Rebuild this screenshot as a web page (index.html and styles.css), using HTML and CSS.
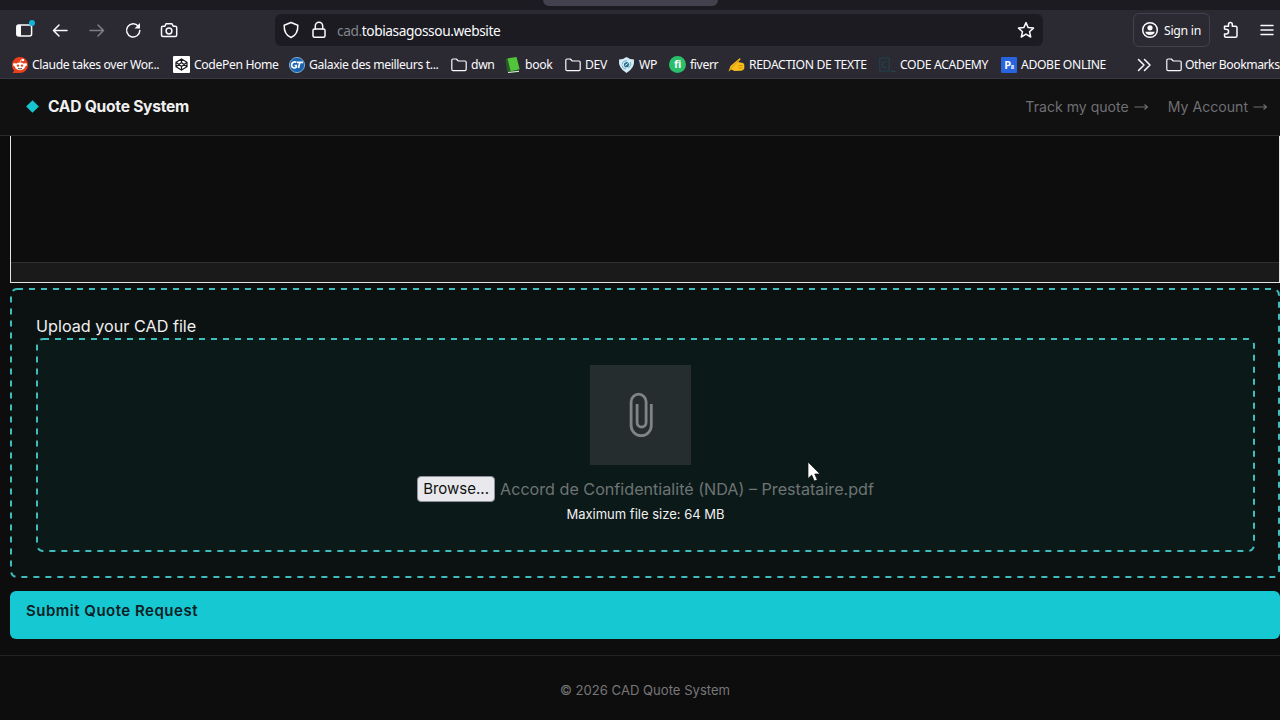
FILE: index.html
```html
<!DOCTYPE html>
<html lang="en">
<head>
    <meta charset="UTF-8">
    <meta name="viewport" content="width=device-width, initial-scale=1.0">
    <title>CAD Quote System</title>
    <link rel="stylesheet" href="styles.css">
</head>
<body>
    <div class="browser">
        <div class="tab-strip"><div class="tab"></div></div>
        <div class="toolbar">
            <div class="nav-buttons">
                <svg width="22" height="22" viewBox="0 0 22 22"><rect x="3.8" y="6" width="14.8" height="11" rx="2" fill="none" stroke="#fbfbfe" stroke-width="1.5"/><path d="M4 6h4v11H4z" fill="#fbfbfe"/><circle cx="19" cy="4" r="3" fill="#12b5d8"/></svg>
                <svg width="22" height="22" viewBox="0 0 22 22"><path d="M18 11.500H4.500M10 6l-5.500 5.500L10 17" class="line"/></svg>
                <svg class="dim" width="22" height="22" viewBox="0 0 22 22"><path d="M4 11.500h13.500M12 6l5.500 5.500L12 17" class="line"/></svg>
                <svg width="22" height="22" viewBox="0 0 22 22"><path d="M16.300 7.200A6.600 6.600 0 1 0 17.800 11.500" class="line"/><path d="M18 4v5.500h-5.500z" fill="#fbfbfe"/></svg>
                <svg width="22" height="22" viewBox="0 0 22 22"><path d="M8 4.800h6l1.200 2.400h2.100q1.400 0 1.400 1.400v7.300q0 1.500-1.500 1.500H5q-1.500 0-1.500-1.500V8.600q0-1.400 1.400-1.400h2z" class="line"/><circle cx="11" cy="12" r="2.900" class="line"/></svg>
            </div>
            <div class="url-bar">
                <svg width="20" height="20" viewBox="0 0 20 20"><path d="M10 2.500l6.800 2.700c.2 5-1.400 10-6.800 12.300C4.600 15.200 3 10.200 3.200 5.200z" class="line"/></svg>
                <svg class="lock" width="20" height="20" viewBox="0 0 20 20"><rect x="4" y="9" width="12" height="8.300" rx="1.500" class="line"/><path d="M6.300 9V6a3.700 3.700 0 0 1 7.400 0v3" class="line"/></svg>
                <span class="url"><span class="sub">cad.</span>tobiasagossou.website</span>
                <svg width="20" height="20" viewBox="0 0 20 20"><path d="M10 2.600l2.200 5 5.300.5-4 3.600 1.200 5.300L10 14.200 5.300 17l1.200-5.300-4-3.600 5.300-.5z" class="line"/></svg>
            </div>
            <div class="toolbar-right">
                <div class="sign-in">
                    <svg width="18" height="18" viewBox="0 0 18 18"><circle cx="9" cy="9" r="7.300" class="line"/><circle cx="9" cy="6.800" r="2.600" fill="#fbfbfe"/><path d="M4.200 10.800h9.600c-.4 2-2.300 3.300-4.800 3.300s-4.400-1.300-4.800-3.300z" fill="#fbfbfe"/></svg>
                    <span>Sign in</span>
                </div>
                <svg width="20" height="20" viewBox="0 0 20 20"><path d="M3.500 9V6.200h4V4.500a1.900 1.900 0 0 1 3.800 0v1.700h3.200q1.500 0 1.500 1.500v8q0 1.500-1.500 1.500h-9.500q-1.500 0-1.500-1.500V14h1.700a2 2 0 0 0 0-4.800z" class="line"/></svg>
                <svg width="14" height="14" viewBox="0 0 14 14"><path d="M1 2.500h12M1 7h12M1 11.500h12" class="line"/></svg>
            </div>
        </div>
        <div class="bookmarks">
            <div class="bookmark"><svg width="16" height="16" viewBox="0 0 16 16"><path d="M8 0a8 8 0 1 1 0 16H.6l1.600-2.500A8 8 0 0 1 8 0z" fill="#e8401c"/><circle cx="2.600" cy="7.600" r="1.600" fill="#fff"/><circle cx="13.400" cy="7.600" r="1.600" fill="#fff"/><circle cx="11" cy="3" r="1.200" fill="#fff"/><path d="M8 5.500l1-2.700 2 .4" fill="none" stroke="#fff" stroke-width=".8"/><ellipse cx="8" cy="9.300" rx="5.200" ry="3.900" fill="#fff"/><circle cx="6" cy="8.600" r="1.200" fill="#e8401c"/><circle cx="10" cy="8.600" r="1.200" fill="#e8401c"/><path d="M6 11.300q2 1.200 4 0" fill="none" stroke="#222" stroke-width=".8"/></svg><span>Claude takes over Wor...</span></div>
            <div class="bookmark"><svg width="17" height="17" viewBox="0 0 17 17"><rect width="17" height="17" rx="1" fill="#fff"/><path d="M8.500 3l5.500 3.300v4.400L8.500 14 3 10.700V6.300zM8.500 3v3.600M8.500 10.400V14M3 6.300l5.500 4.100L14 6.300M3 10.700l5.500-4.100 5.500 4.100" fill="none" stroke="#16161c" stroke-width="1.200"/></svg><span>CodePen Home</span></div>
            <div class="bookmark"><svg width="16" height="16" viewBox="0 0 16 16"><circle cx="8" cy="8" r="7.600" fill="#1c64ae" stroke="#8fc1e8" stroke-width=".8"/><path d="M7.500 5.300C4.500 4 2.400 6 2.600 8.400s3 3.400 4.700 1.800V8.500H5.500M8 5.300h6M10.800 5.500L9.500 11" fill="none" stroke="#fff" stroke-width="1.700"/></svg><span>Galaxie des meilleurs t...</span></div>
            <div class="bookmark"><svg width="16" height="16" viewBox="0 0 16 16"><path d="M.8 3.300q0-1.300 1.300-1.300h3.200l2 2h6.600q1.300 0 1.300 1.300v7q0 1.300-1.300 1.300H2.100q-1.300 0-1.300-1.300z" class="line folder"/></svg><span>dwn</span></div>
            <div class="bookmark"><svg width="16" height="16" viewBox="0 0 16 16"><path d="M.5 2.500L3 1l2.600 12.500L14 13v2.200L4 16l-2-1.600z" fill="#285a28"/><path d="M2.500 1.400L11.600 0l3 12.200-9 2z" fill="#52c43a"/><path d="M3 15.500l11-1.200" stroke="#e8eee8" stroke-width="1"/></svg><span>book</span></div>
            <div class="bookmark"><svg width="16" height="16" viewBox="0 0 16 16"><path d="M.8 3.300q0-1.300 1.300-1.300h3.200l2 2h6.600q1.300 0 1.300 1.300v7q0 1.300-1.300 1.300H2.100q-1.300 0-1.300-1.300z" class="line folder"/></svg><span>DEV</span></div>
            <div class="bookmark"><svg width="17" height="16" viewBox="0 0 17 16"><path d="M1 2.500Q5 2.500 8.500 0 12 2.500 16 2.500 17 11 8.500 16 0 11 1 2.500z" fill="#d7edf6"/><path d="M4 7.500q.5-4 5-4M12.500 5q1.500 3.500-2 6M8 12q-3.500-.5-4-3.500" fill="none" stroke="#6db4cf" stroke-width="1"/><path d="M6.300 6l3-1.300 2 2.300-1 3-3 .5-1.500-2z" fill="#28718d"/><path d="M7.200 8.500l2.500-2" stroke="#fff"/></svg><span>WP</span></div>
            <div class="bookmark"><span class="fiverr-logo">fi</span><span>fiverr</span></div>
            <div class="bookmark"><svg width="17" height="16" viewBox="0 0 16 16"><path d="M0 14.500L2 9l4-3.500L11.500 1l.5 1.500L9.500 5l5 1q1.500.8 1.300 2.500v3q-.8 2-3 2.300L6 14l-3-1.500z" fill="#f6bd1b"/><path d="M1 13L10 3.500M10 8.500h4M10 11h4" stroke="#cf850b" stroke-width=".8" fill="none"/></svg><span>REDACTION DE TEXTE</span></div>
            <div class="bookmark"><svg width="17" height="16" viewBox="0 0 17 16"><path d="M.8 1h9.400v13H.8zM7.700 5H4.500Q3.500 5 3.500 6v3.500q0 1 1 1h3.200M12 14.300h4.500" fill="none" stroke="#21424e" stroke-width="1.200"/></svg><span>CODE ACADEMY</span></div>
            <div class="bookmark"><span class="adobe-logo">P<small>8</small></span><span>ADOBE ONLINE</span></div>
            <svg width="16" height="16" viewBox="0 0 16 16"><path d="M1.500 2.500L7 8l-5.500 5.500M7.500 2.500L13 8l-5.500 5.500" class="line"/></svg>
            <div class="bookmark other"><svg width="16" height="16" viewBox="0 0 16 16"><path d="M.8 3.300q0-1.300 1.300-1.300h3.200l2 2h6.600q1.300 0 1.300 1.300v7q0 1.300-1.300 1.300H2.100q-1.300 0-1.300-1.300z" class="line folder"/></svg><span>Other Bookmarks</span></div>
        </div>
    </div>

    <header class="site-header">
        <a class="brand"><span class="diamond"></span>CAD Quote System</a>
        <nav>
            <a>Track my quote <svg width="15" height="10" viewBox="0 0 15 10"><path d="M.5 6h13M10.500 3.500L13.500 6l-3 2.500"/></svg></a>
            <a>My Account <svg width="15" height="10" viewBox="0 0 15 10"><path d="M.5 6h13M10.500 3.500L13.500 6l-3 2.500"/></svg></a>
        </nav>
    </header>

    <main>
        <div class="editor"><div class="editor-status"></div></div>

        <div class="upload">
            <svg class="dashes"><rect x="1" y="1" rx="6"/></svg>
            <label>Upload your CAD file</label>
            <div class="dropzone">
                <svg class="dashes"><rect x="1" y="1" rx="6"/></svg>
                <div class="file-icon">
                    <svg width="26" height="48" viewBox="0 0 26 48"><path d="M23.300 13v21.500a10.100 10.100 0 0 1-20.200 0V10.700a7.500 7.500 0 0 1 15 0v20.800a4.500 4.500 0 0 1-9 0V13"/></svg>
                </div>
                <div class="file-row">
                    <button class="browse">Browse...</button>
                    <span class="file-name">Accord de Confidentialité (NDA) – Prestataire.pdf</span>
                </div>
                <div class="hint">Maximum file size: 64 MB</div>
            </div>
        </div>

        <button class="submit">Submit Quote Request</button>
    </main>

    <footer>© 2026 CAD Quote System</footer>

    <svg class="cursor" width="14" height="22" viewBox="0 0 14 22"><path d="M1 1v16.500l3.700-3.400 2.600 6 3-1.300-2.600-5.800H13z" fill="#fff" stroke="#101010" stroke-width=".7"/></svg>
</body>
</html>
```
FILE: styles.css
```css
* {
    box-sizing: border-box;
}
body {
    margin: 0;
    width: 1280px;
    height: 720px;
    overflow: hidden;
    background: #0d0d0d;
    color: #f0f0f0;
    font-family: Inter, sans-serif;
}
svg {
    display: block;
    flex: none;
}
.line {
    fill: none;
    stroke: #fbfbfe;
    stroke-width: 1.5;
    stroke-linejoin: round;
    stroke-linecap: round;
}
.folder {
    stroke-width: 1.2;
}
.dim {
    opacity: 0.4;
}

/* browser chrome */
.browser {
    height: 79px;
    background: #2b2a33;
    border-bottom: 1px solid #38373f;
    color: #fbfbfe;
    font-family: "Noto Sans", sans-serif;
    overflow: hidden;
}
.tab-strip {
    height: 10px;
    background: #1c1b22;
}
.tab {
    width: 175px;
    height: 6px;
    margin-left: 543px;
    background: #42414d;
    border-radius: 0 0 6px 6px;
}
.toolbar {
    display: flex;
    align-items: center;
    height: 40px;
}
.nav-buttons {
    display: flex;
    gap: 14.3px;
    width: 275px;
    padding-left: 13px;
}
.url-bar {
    display: flex;
    align-items: center;
    width: 768px;
    height: 32px;
    padding: 0 7px 0 6px;
    background: #1c1b22;
    border-radius: 6px;
}
.lock {
    margin-left: 8px;
}
.url {
    flex: 1;
    margin-left: 8px;
    font-size: 13.7px;
    letter-spacing: -0.4px;
}
.sub {
    color: #85848c;
}
.toolbar-right {
    display: flex;
    align-items: center;
    gap: 19px;
    margin-left: 90px;
}
.toolbar-right > svg:nth-child(2) {
    margin-left: -8px;
}
.sign-in {
    display: flex;
    align-items: center;
    gap: 5px;
    width: 77px;
    height: 34px;
    padding-left: 7px;
    border: 1px solid #42414d;
    border-radius: 6px;
    font-size: 12.3px;
    letter-spacing: -0.3px;
}
.bookmarks {
    display: grid;
    grid-template-columns: 161px 116px 162px 54px 60px 53px 51px 59px 151px 121px 137px 29px 1fr;
    align-items: center;
    height: 29px;
    padding-left: 12px;
    font-size: 12.2px;
    letter-spacing: -0.37px;
}
.bookmark {
    display: flex;
    align-items: center;
    gap: 4px;
    white-space: nowrap;
}
.other {
    gap: 3px;
    letter-spacing: -0.45px;
}
.fiverr-logo, .adobe-logo {
    width: 17px;
    height: 17px;
    background: #2bbf6a;
    border-radius: 50%;
    font: bold 11px/16px "Open Sans", sans-serif;
    text-align: center;
}
.adobe-logo {
    width: 16px;
    height: 16px;
    margin-left: 1px;
    background: #2864e0;
    border-radius: 1px;
}
.adobe-logo small {
    font-size: 6px;
}

/* page */
.site-header {
    display: flex;
    align-items: center;
    justify-content: space-between;
    height: 57px;
    padding: 0 12px 2px 26px;
    background: #111;
    border-bottom: 1px solid #2b2b2b;
}
.brand {
    display: flex;
    align-items: center;
    gap: 11px;
    font-size: 15.6px;
    font-weight: 700;
    letter-spacing: -0.25px;
}
.diamond {
    width: 9px;
    height: 9px;
    margin-left: 2px;
    background: #16c5cf;
    transform: rotate(45deg);
}
.site-header nav {
    display: flex;
    gap: 19px;
    font-size: 14.1px;
    color: #6f6f73;
}
.site-header nav a {
    display: flex;
    align-items: center;
    gap: 5px;
}
.site-header nav path {
    fill: none;
    stroke: #6f6f73;
    stroke-width: 1.1;
}
main {
    padding-left: 10px;
}
.editor {
    display: flex;
    align-items: flex-end;
    height: 147px;
    border: 1px solid #e4e4e4;
    border-top: 0;
}
.editor-status {
    flex: 1;
    height: 20px;
    background: #1b1a1b;
    border-top: 1px solid #303030;
}
.upload {
    position: relative;
    height: 290px;
    margin-top: 5px;
    padding: 28px 25px 25px 26px;
    background: #0c1212;
    border-radius: 7px;
}
.upload label {
    display: block;
    height: 22px;
    font-size: 16.2px;
    line-height: 20px;
}
.dropzone {
    position: relative;
    display: flex;
    flex-direction: column;
    align-items: center;
    height: 214px;
    padding-top: 27px;
    background: #0c1919;
    border-radius: 7px;
}
.dashes {
    position: absolute;
    left: 0;
    top: 0;
    width: 100%;
    height: 100%;
}
.dashes rect {
    width: calc(100% - 2px);
    height: calc(100% - 2px);
    fill: none;
    stroke: #3fbdbd;
    stroke-width: 2;
    stroke-dasharray: 6 6;
}
.file-icon {
    display: flex;
    align-items: center;
    justify-content: center;
    width: 101px;
    height: 100px;
    margin-right: 11px;
    padding-left: 2px;
    background: #262d2e;
}
.file-icon path {
    fill: none;
    stroke: #7f8586;
    stroke-width: 2.8;
}
.file-row {
    display: flex;
    align-items: center;
    gap: 5px;
    height: 28px;
    margin-top: 10px;
    font-size: 16.15px;
}
.browse {
    width: 78px;
    height: 26px;
    margin-bottom: 1px;
    padding: 0;
    border: 1.5px solid #8f8f9d;
    border-radius: 4px;
    background: #e9e9ed;
    color: #111;
    font: 15px Inter, sans-serif;
}
.file-name {
    color: #6c7474;
}
.hint {
    margin-top: 3px;
    font-size: 13px;
}
.submit {
    display: block;
    width: 100%;
    height: 48px;
    margin-top: 13px;
    padding: 0 16px 9px;
    border: 0;
    border-radius: 6px;
    background: #16c8d2;
    color: #0c2024;
    font: 600 15px Inter, sans-serif;
    letter-spacing: 0.5px;
    text-align: left;
}
footer {
    height: 65px;
    margin-top: 16px;
    padding-left: 10px;
    border-top: 1px solid #232323;
    color: #77777a;
    font-size: 13.1px;
    line-height: 69px;
    text-align: center;
}
.cursor {
    position: absolute;
    left: 807px;
    top: 461px;
}
```
